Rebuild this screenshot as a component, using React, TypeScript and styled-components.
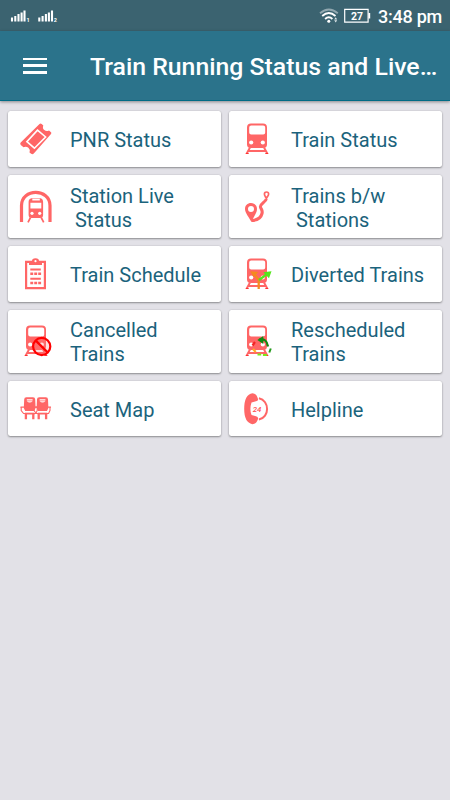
import React from "react";
import styled, { createGlobalStyle } from "styled-components";

const GlobalStyle = createGlobalStyle`
  * { box-sizing: border-box; }
  body { margin: 0; background: #e2e1e7; font-family: Roboto, "Liberation Sans", sans-serif; }
`;

const Screen = styled.div`
  width: 450px;
  height: 800px;
  overflow: hidden;
  background: #e2e1e7;
  display: flex;
  flex-direction: column;
`;

const StatusBar = styled.header`
  height: 31px;
  flex: none;
  background: #3b6370;
  color: #fff;
  display: flex;
  align-items: center;
  padding: 1px 8px 0 10px;
`;

const Signals = styled.svg`
  width: 50px;
  height: 16px;
  margin-right: auto;
`;

const Wifi = styled.svg`
  width: 20px;
  height: 16px;
`;

const Battery = styled.svg`
  width: 27px;
  height: 16px;
  margin: 0 7px 0 5px;
`;

const Clock = styled.time`
  font-size: 18px;
  line-height: 28px;
  font-weight: 500;
  letter-spacing: -0.25px;
  width: 64px;
  padding-top: 1px;
  white-space: nowrap;
`;

const AppBar = styled.div`
  height: 70px;
  flex: none;
  background: #2b738b;
  border-bottom: 1px solid #006b85;
  box-shadow: 0 1px 3px rgba(0, 0, 0, 0.4);
  display: flex;
  align-items: center;
  padding: 2px 12px 0 23px;
`;

const MenuButton = styled.button`
  width: 24px;
  height: 16px;
  padding: 0;
  border: 0;
  background: none;
  display: flex;
  flex-direction: column;
  justify-content: space-between;
  margin: 0 43px 2px 0;

  span { height: 2.6px; width: 24px; background: #fff; }
`;

const Title = styled.h1`
  margin: 0;
  color: #fff;
  font-size: 24.8px;
  line-height: 32px;
  font-weight: 500;
  white-space: nowrap;
`;

const Grid = styled.main`
  display: grid;
  grid-template-columns: 213px 213px;
  grid-template-rows: 56px 63px 56px 63px 55px;
  gap: 8px;
  padding: 10px 8px;
`;

const Card = styled.a<{ $lift?: boolean }>`
  background: #fff;
  border-radius: 2.5px;
  box-shadow: 0 1px 2px rgba(0, 0, 0, 0.36), 0 0 2px rgba(0, 0, 0, 0.12);
  display: flex;
  align-items: center;
  padding-left: 12px;
  padding-bottom: ${(p) => (p.$lift ? 2 : 0)}px;
  gap: 18px;
`;

const Icon = styled.svg`
  width: 32px;
  height: 32px;
  flex: none;
  overflow: visible;
`;

const Label = styled.span`
  color: #1b637c;
  font-size: 20px;
  line-height: 24px;
  white-space: pre;
  padding-top: 2px;
`;

const RED = "#ff6666";

const Train = () => (
  <>
    <path fill={RED} fillRule="evenodd" d="M10 .5h12q4 0 4 4v17q0 3.5-4 3.5H10q-4 0-4-3.5v-17q0-4 4-4zM10.2 2.5q-2 0-2 2v5q0 2 2 2h12q2 0 2-2v-5q0-2-2-2z" />
    <circle cx="10.2" cy="19.5" r="2.1" fill="#fff" />
    <circle cx="21.8" cy="19.5" r="2.1" fill="#fff" />
    <path d="M9 24.5L5.7 30.5M23 24.5l3.3 6M7.5 28h17" stroke={RED} strokeWidth="1.9" fill="none" />
    <path d="M4.7 30.5h3M24.3 30.5h3" stroke="#f33" strokeWidth="1" />
  </>
);

const Ticket = () => (
  <>
    <path fill={RED} d="M19.5 1Q20.5 0 21.7 1L23.3 2.5Q22.2 5.5 24.3 7Q26.3 8.7 29 7.4L31 9.2Q31.8 10 31 11L13.8 30.4Q12.5 31.8 11.2 30.8L9.5 29.4Q10.5 26.6 8.4 24.8Q6.2 23 3.5 24.2L.8 22Q-.4 20.7.7 19.5z" />
    <path d="M17.5 7.2L25.6 14L14.4 25.2L6.9 18.7z" stroke="#fff" strokeWidth="1.6" fill="none" />
  </>
);

const StationIcon = () => (
  <>
    <path d="M1.5 31V14.5C1.5-3 30-3 30 14.5V31" stroke={RED} strokeWidth="3.2" fill="none" />
    <path fill={RED} fillRule="evenodd" d="M11.5 7.2h9q2.6.5 2.6 4V24q0 3-3 3h-8.5q-3 0-3-3V11q0-3.4 2.9-3.8zM12.3 7.8v1.7h7.5V7.8zM10.4 11.7v5.8h10.9v-5.8z" />
    <circle cx="12" cy="22.3" r="1.6" fill="#fff" />
    <circle cx="19.7" cy="22.3" r="1.6" fill="#fff" />
    <path d="M10.5 26.5L8 31.3M21.2 26.5l2.5 4.8" stroke={RED} strokeWidth="1.7" />
  </>
);

const RouteIcon = () => (
  <>
    <path d="M25.3 8C24.6 11 19.5 12.5 19.4 15.5C19.4 18 22 18.5 21 22.5C19.7 28 15.5 29.3 10.5 29.5" stroke={RED} strokeWidth="3.1" fill="none" />
    <path fill={RED} fillRule="evenodd" d="M10.4 31C8 26 4 22 4 18C4 14.5 6.5 12 10 12S16 14.5 16 18C16 22 12.5 26 10.4 31zM10 14.9a3 3 0 1 0 0 6a3 3 0 1 0 0-6z" />
    <path fill="#fff" stroke={RED} strokeWidth="1.7" d="M25.4 7.5C24.4 5.4 23.4 4.6 23.4 3C23.4.3 27.6.3 27.6 3C27.6 4.6 26.4 5.4 25.4 7.5z" />
  </>
);

const ScheduleIcon = () => (
  <>
    <path d="M6.1 3.9h18.8v26.2H6.1z" fill="#fff" stroke={RED} strokeWidth="2.2" />
    <path fill={RED} d="M9 7V4q0-1 1-1h2Q12 .2 15.5.2T19 3h2q1 0 1 1v3z" />
    <circle cx="15.5" cy="3.2" r="1.1" fill="#fff" />
    <path d="M10.3 11.5h10.5M10.3 20.8h10.5" stroke={RED} strokeWidth="2" />
    <path d="M10.3 15.8h10.8M10.3 25h10.8" stroke={RED} strokeWidth="2.4" strokeDasharray="2.9 1.05" />
  </>
);

const DivertedIcon = () => (
  <>
    <Train />
    <path d="M17.7 31V22L14 17" stroke="#f58a1f" strokeWidth="2.3" fill="none" />
    <path d="M9.3 13.3l8 .7l-4.6 5z" fill="#f58a1f" />
    <path d="M18 22l7.5-5.5" stroke="#55e61c" strokeWidth="2.2" />
    <path d="M30.5 13.3l-8.2 1l5.7 6z" fill="#55e61c" />
  </>
);

const CancelledIcon = () => (
  <>
    <Train />
    <circle cx="21.7" cy="21.5" r="8.6" stroke="#f00" strokeWidth="2.2" fill="#ff7b7b" fillOpacity="0.25" />
    <path d="M15.8 15.6l11.8 11.8" stroke="#f00" strokeWidth="2.2" />
  </>
);

const RescheduledIcon = () => (
  <>
    <Train />
    <path d="M18 14.5q8-1.5 9 7" stroke="#128a12" strokeWidth="2.2" fill="none" />
    <path d="M16.3 15l6-4v8z" fill="#128a12" />
    <path d="M29.8 23.5l-1.5 4" stroke="#259b1d" strokeWidth="2" />
    <path d="M16.5 29.5h3.7M21.9 30.1l4-.1" stroke="#7bea19" strokeWidth="2" />
    <path d="M12 24l2.7 3" stroke="#ffae22" strokeWidth="2.2" />
    <path d="M11.5 20.5l2.5-3.5" stroke="#f32525" strokeWidth="2.2" />
  </>
);

const Seat = () => (
  <>
    <path fill={RED} fillRule="evenodd" d="M4 6.5Q4 4.3 6.2 4.3h6.6Q15 4.3 15 6.5l.4 8.5-1.4 3H5l-1.4-3zM6.6 6.2v1.2h5.8V6.2zM6.5 8.2q3 2.8 6 0z" />
    <path d="M1 14v3.5l2.4 3h12.2l1.4-3V14" fill="none" stroke={RED} strokeWidth="1.1" />
    <path d="M.3 14.2H4M15 14.2h3" stroke={RED} strokeWidth="1.3" />
    <path d="M4.7 20.6h9.6" stroke={RED} strokeWidth="1.8" />
    <path d="M5.7 21v5.3M13.1 21v5.3" stroke={RED} strokeWidth="2.3" />
  </>
);

const SeatsIcon = () => (
  <>
    <g transform="translate(.2)"><Seat /></g>
    <g transform="translate(13)"><Seat /></g>
  </>
);

const HelplineIcon = () => (
  <>
    <path fill={RED} d="M11.5.3Q15.5.6 17 6Q17.3 7.8 15 8.3L10.5 9.5Q8.3 16 10.5 22L15 23.3Q17.5 24 17 26Q15.5 31.2 11.3 31.2Q3.2 29.5 3.2 16Q3.2 1.5 11.5.3z" />
    <path d="M17.9 5.3C28.8 7.4 28.8 24.5 17.9 26.5" stroke={RED} strokeWidth="2" fill="none" />
    <text x="11.8" y="18.6" fill="#ff5050" fontFamily="Roboto, sans-serif" fontSize="7.8" fontWeight="500" fontStyle="italic">24</text>
  </>
);

const items: { label: string; art: React.ReactNode; lift?: boolean }[] = [
  { label: "PNR Status", art: <Ticket /> },
  { label: "Train Status", art: <Train /> },
  { label: "Station Live\n Status", art: <StationIcon /> },
  { label: "Trains b/w\n Stations", art: <RouteIcon /> },
  { label: "Train Schedule", art: <ScheduleIcon /> },
  { label: "Diverted Trains", art: <DivertedIcon /> },
  { label: "Cancelled\nTrains", art: <CancelledIcon />, lift: true },
  { label: "Rescheduled\nTrains", art: <RescheduledIcon />, lift: true },
  { label: "Seat Map", art: <SeatsIcon /> },
  { label: "Helpline", art: <HelplineIcon /> },
];

export default function App() {
  return (
    <Screen>
      <GlobalStyle />
      <StatusBar>
        <Signals viewBox="0 0 50 16">
          <path d="M2 13.5v-4M5.3 13.5V8M8.5 13.5V6M11.6 13.5V4.5M14.5 13.5v-11M29.3 13.5v-4M32.6 13.5V8M35.9 13.5V6M38.9 13.5V4.5M42 13.5v-11" stroke="#fff" strokeWidth="2.1" />
          <text x="16.5" y="13.8" fill="#fff" fontSize="5.5" fontWeight="700" fontFamily="Roboto, sans-serif">1</text>
          <text x="43.8" y="13.8" fill="#fff" fontSize="5.5" fontWeight="700" fontFamily="Roboto, sans-serif">2</text>
        </Signals>
        <Wifi viewBox="0 0 20 16">
          <path d="M1 5.2Q9.8-2.3 18.8 5.2" stroke="#91a7af" strokeWidth="1.8" fill="none" />
          <path d="M3.2 8Q9.8 2 16.5 8M6.1 11Q9.8 7.5 13.4 11" stroke="#fff" strokeWidth="1.8" fill="none" />
          <circle cx="9.8" cy="13.3" r="1.5" fill="#fff" />
          <path d="M15.2 11.4l1.5-2.2 1.5 2.2zM16.7 14.4l1.5-2.2h-3z" fill="#dce5e8" />
        </Wifi>
        <Battery viewBox="0 0 27 16">
          <path d="M.7 1.4h23.4v12.8H.7z" stroke="#fff" strokeWidth="1.2" fill="none" />
          <path d="M25.3 5v5.5" stroke="#fff" strokeWidth="1.8" />
          <text x="7" y="11.8" fill="#fff" fontSize="10.5" fontWeight="700" fontFamily="Roboto, sans-serif">27</text>
        </Battery>
        <Clock>3:48 pm</Clock>
      </StatusBar>
      <AppBar>
        <MenuButton aria-label="Menu"><span /><span /><span /></MenuButton>
        <Title>Train Running Status and Live…</Title>
      </AppBar>
      <Grid>
        {items.map((item) => (
          <Card key={item.label} $lift={item.lift}>
            <Icon viewBox="0 0 32 32">{item.art}</Icon>
            <Label>{item.label}</Label>
          </Card>
        ))}
      </Grid>
    </Screen>
  );
}
